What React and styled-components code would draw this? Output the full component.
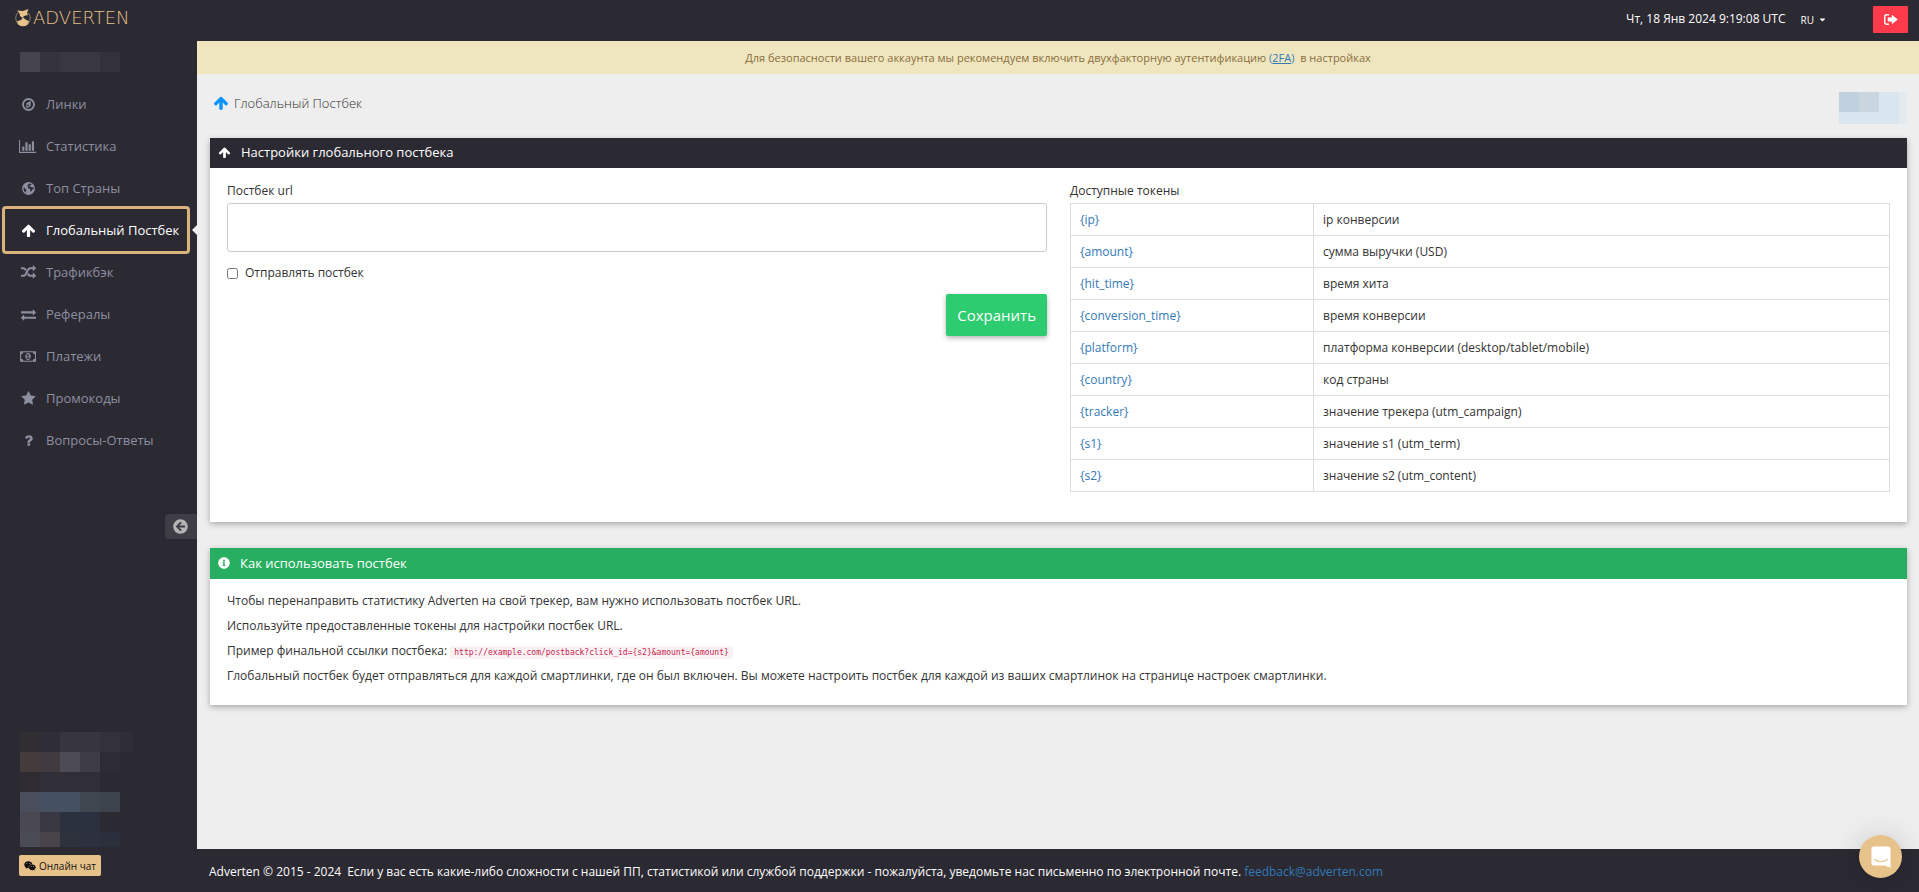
import React, { useState } from "react";
import styled, { createGlobalStyle } from "styled-components";
import { FaArrowCircleLeft, FaInfoCircle, FaWeixin, FaCaretDown } from "react-icons/fa";

const GlobalStyle = createGlobalStyle`
    * { box-sizing: border-box; }
    body { margin: 0; background: #eeeeee; color: #333; font-family: "Open Sans", "Noto Sans", sans-serif; font-size: 12px; line-height: 17px; }
    a { color: #337ab7; text-decoration: none; }
    button, textarea, input { font-family: inherit; }
`;

const Page = styled.div`
    display: grid;
    grid-template-columns: 197px 1fr;
    grid-template-rows: 41px 1fr;
    min-height: 100vh;
`;

const Header = styled.header`
    grid-column: 1 / -1;
    display: flex;
    align-items: center;
    padding: 0 11px 2px 14px;
    background: #2b2932;
    color: #fff;
`;

const Logo = styled.a`
    display: flex;
    margin: 0 auto 2px 0;
    svg { display: block; }
    text { font-family: "DejaVu Sans", sans-serif; font-weight: 200; font-size: 18px; }
`;

const Lang = styled.button`
    display: flex;
    align-items: center;
    gap: 4px;
    margin: 0 46px 0 15px;
    padding: 0;
    border: 0;
    background: none;
    color: #fff;
    font-size: 10px;
    cursor: pointer;
`;

const Clock = styled.time`
    margin-bottom: 2px;
    font-size: 12px;
`;

const Logout = styled.button`
    display: flex;
    align-items: center;
    justify-content: center;
    width: 35px;
    height: 27px;
    padding: 0;
    border: 0;
    border-radius: 1px;
    background: #ff3b4b;
    color: #fff;
    cursor: pointer;
`;

const Sidebar = styled.aside`
    display: flex;
    flex-direction: column;
    padding: 11px 0 16px;
    background: #2b2932;
`;

const Mosaic = styled.div`
    display: grid;
    grid-template-columns: ${({ $cols }) => $cols};
    grid-template-rows: ${({ $rows }) => $rows};
    margin-left: ${({ $indent }) => $indent || "0"};
`;

const Cell = styled.span`
    background: ${({ $color }) => $color};
`;

const Menu = styled.nav`
    display: flex;
    flex-direction: column;
    margin: 11px 10px 53px 5px;
`;

const MenuItem = styled.a`
    position: relative;
    display: flex;
    align-items: center;
    gap: 9px;
    height: 42px;
    padding-left: 14px;
    font-size: 13px;
    color: ${({ $active }) => ($active ? "#fff" : "#8d8fa0")};
    outline: ${({ $active }) => ($active ? "3px solid #d9b27c" : "none")};
    border-radius: 1px;

    &::after {
        content: "";
        display: ${({ $active }) => ($active ? "block" : "none")};
        position: absolute;
        right: -10px;
        top: 16px;
        border: 5px solid transparent;
        border-left: 0;
        border-right-color: #eef1f3;
    }
`;

const MenuIcon = styled.span`
    display: flex;
    justify-content: center;
    width: 18px;
`;

const Collapse = styled.button`
    display: flex;
    align-items: center;
    align-self: flex-end;
    width: 32px;
    height: 25px;
    margin-bottom: auto;
    padding: 0 8px;
    border: 0;
    border-radius: 4px 0 0 4px;
    background: #3f3d46;
    color: #b4b4b4;
    cursor: pointer;
`;

const ChatButton = styled.button`
    display: flex;
    align-items: center;
    gap: 3px;
    align-self: flex-start;
    height: 21px;
    margin: 8px 0 0 19px;
    padding: 0 5px;
    border: 0;
    border-radius: 2px;
    background: #e8c28b;
    color: #111;
    font-size: 10px;
    cursor: pointer;
`;

const Main = styled.div`
    display: flex;
    flex-direction: column;
    min-width: 0;
`;

const Notice = styled.div`
    padding: 8px 0;
    background: #efe6c0;
    color: #8a6d3b;
    font-size: 11px;
    text-align: center;
`;

const Content = styled.main`
    flex: 1;
    padding: 18px 12px 0 13px;
`;

const TitleRow = styled.div`
    display: flex;
    justify-content: space-between;
    height: 46px;
`;

const Title = styled.h1`
    display: flex;
    align-items: center;
    gap: 5px;
    height: 22px;
    margin: 0 0 0 3px;
    font-size: 13px;
    font-weight: 300;
    color: #333;
    svg { color: #0b93ff; }
`;

const Panel = styled.section`
    margin-bottom: 26px;
    background: #fff;
    box-shadow: 0 2px 6px rgba(0, 0, 0, 0.3);
`;

const PanelHead = styled.h2`
    display: flex;
    align-items: center;
    gap: 10px;
    height: ${({ $green }) => ($green ? "31px" : "30px")};
    margin: 0;
    padding: 0 8px 1px;
    background: ${({ $green }) => ($green ? "#27ae60" : "#2b2932")};
    color: #fff;
    font-size: 13px;
    font-weight: 400;
`;

const Columns = styled.form`
    display: grid;
    grid-template-columns: 1fr 1fr;
    gap: 23px;
    padding: 14px 17px 30px;
`;

const Column = styled.div`
    display: flex;
    flex-direction: column;
    min-width: 0;
`;

const Label = styled.label`
    margin-bottom: 4px;
`;

const UrlBox = styled.textarea`
    height: 49px;
    padding: 6px 8px;
    border: 1px solid #ccc;
    border-radius: 3px;
    resize: none;
    font-size: 12px;
`;

const Check = styled.label`
    display: flex;
    align-items: center;
    gap: 7px;
    margin: 12px 0 13px;
    input { width: 11px; height: 11px; margin: 1px 0 0; }
`;

const Save = styled.button`
    align-self: flex-end;
    height: 42px;
    padding: 0 11px;
    border: 0;
    border-radius: 2px;
    background: #2ecc71;
    box-shadow: 0 2px 5px rgba(0, 0, 0, 0.3);
    color: #fff;
    font-size: 15px;
    cursor: pointer;
`;

const Tokens = styled.table`
    width: 100%;
    border-collapse: collapse;
    caption { margin-bottom: 4px; text-align: left; }
    td { height: 32px; padding: 0 9px; border: 1px solid #ddd; }
    td:first-child { width: 243px; }
`;

const Help = styled.div`
    padding: 13px 17px 13px;
    p { margin: 0 0 8px; }
`;

const Code = styled.code`
    padding: 2px 4px;
    border-radius: 2px;
    background: #f9f2f4;
    color: #c7254e;
    font-family: "DejaVu Sans Mono", monospace;
    font-size: 8px;
    line-height: 1;
`;

const Footer = styled.footer`
    padding: 14px 12px 12px;
    background: #2b2932;
    color: #fff;
    font-size: 12px;
    span { margin-right: 6px; }
`;

const Messenger = styled.button`
    position: fixed;
    right: 17px;
    bottom: 14px;
    display: flex;
    align-items: center;
    justify-content: center;
    width: 43px;
    height: 43px;
    padding: 0;
    border: 0;
    border-radius: 50%;
    background: #e8c28b;
    box-shadow: 0 1px 6px rgba(0, 0, 0, 0.06), 0 2px 32px rgba(0, 0, 0, 0.16);
    cursor: pointer;
`;

const glyphs = {
    compass: "M896 128a768 768 0 1 0 0 1536a768 768 0 1 0 0-1536zM896 352a544 544 0 1 1 0 1088a544 544 0 1 1 0-1088zM1152 489v607l-512 256v-607zM768 852v293l256-128z",
    chart: "M640 896v512h-256v-512h256zm384-512v1024h-256v-1024h256zm1024 1152v128h-2048v-1536h128v1408h1920zm-640-896v768h-256v-768h256zm384-384v1152h-256v-1152h256z",
    globe: "M896 128a768 768 0 1 0 0 1536a768 768 0 1 0 0-1536zM1060 300q120 30 220 110l-90 30-40 90-120 20-60 90 90 40 110-20 60 90 130 40 110-50 50 90-60 160-110 40-70 150-120 90-60-130 20-150-110-80-150-20-60-130 80-120-90-60-30-110 130-60 90-90zM330 760l110 60 50 130 130 90 10 120-70 110 10 130q-220-130-270-380z",
    arrow: "M1675 971q0 51-37 90l-75 75q-38 38-91 38-54 0-90-38l-294-293v704q0 52-37.5 84.5t-90.5 32.5h-128q-53 0-90.5-32.5t-37.5-84.5v-704l-294 293q-36 38-90 38t-90-38l-75-75q-38-38-38-90 0-53 38-91l651-651q35-37 90-37 54 0 91 37l651 651q37 39 37 91z",
    random: "M666 481q-60 92-137 273-22-45-37-72.5t-40.5-63.5-51-56.5-63-35-81.5-14.5h-224q-14 0-23-9t-9-23v-192q0-14 9-23t23-9h224q250 0 410 225zm1126 799q0 14-9 23l-320 320q-9 9-23 9-13 0-22.5-9.5t-9.5-22.5v-192q-32 0-85 .5t-81 1-73-1-71-5-64-10.5-63-18.5-58-28.5-59-40-55-53.5-56-69.5q59-93 136-273 22 45 37 72.5t40.5 63.5 51 56.5 63 35 81.5 14.5h256v-192q0-14 9-23t23-9q12 0 24 10l319 319q9 9 9 23zm0-896q0 14-9 23l-320 320q-9 9-23 9-13 0-22.5-9.5t-9.5-22.5v-192h-256q-48 0-87 15t-69 45-51 61.5-45 77.5q-32 62-78 171-29 66-49.5 111t-54 105-64 100-74 83-90 68.5-106.5 42-128 16.5h-224q-14 0-23-9t-9-23v-192q0-14 9-23t23-9h224q48 0 87-15t69-45 51-61.5 45-77.5q32-62 78-171 29-66 49.5-111t54-105 64-100 74-83 90-68.5 106.5-42 128-16.5h256v-192q0-14 9-23t23-9q12 0 24 10l319 319q9 9 9 23z",
    exchange: "M1792 1184v192q0 13-9.5 22.5t-22.5 9.5h-1376v192q0 13-9.5 22.5t-22.5 9.5q-12 0-24-10l-319-320q-9-9-9-22 0-14 9-23l320-320q9-9 23-9 13 0 22.5 9.5t9.5 22.5v192h1376q13 0 22.5 9.5t9.5 22.5zm0-544q0 14-9 23l-320 320q-9 9-23 9-13 0-22.5-9.5t-9.5-22.5v-192h-1376q-13 0-22.5-9.5t-9.5-22.5v-192q0-13 9.5-22.5t22.5-9.5h1376v-192q0-14 9-23t23-9q12 0 24 10l319 319q9 9 9 23z",
    money: "M768 1152h384v-96h-128v-448h-114l-148 137 77 80q42-37 55-57h2v288h-128v96zm512-256q0 70-21 142t-59.5 134-101.5 101-138 39-138-39-101.5-101-59.5-134-21-142 21-142 59.5-134 101.5-101 138-39 138 39 101.5 101 59.5 134 21 142zm512 256v-512q-106 0-181-75t-75-181h-1152q0 106-75 181t-181 75v512q106 0 181 75t75 181h1152q0-106 75-181t181-75zm128-832v1152q0 26-19 45t-45 19h-1792q-26 0-45-19t-19-45v-1152q0-26 19-45t45-19h1792q26 0 45 19t19 45z",
    star: "M1728 647q0 22-26 48l-363 354 86 500q1 7 1 20 0 21-10.5 35.5t-30.5 14.5q-19 0-40-12l-449-236-449 236q-22 12-40 12-21 0-31.5-14.5t-10.5-35.5q0-6 2-20l86-500-364-354q-25-27-25-48 0-37 56-46l502-73 225-455q19-41 49-41t49 41l225 455 502 73q56 9 56 46z",
    question: "M1088 1256v240q0 16-12 28t-28 12h-240q-16 0-28-12t-12-28v-240q0-16 12-28t28-12h240q16 0 28 12t12 28zm316-600q0 54-15.5 101t-35 76.5-55 59.5-57.5 43.5-61 35.5q-41 23-68.5 65t-27.5 67q0 17-12 32.5t-28 15.5h-240q-15 0-25.5-18.5t-10.5-37.5v-45q0-83 65-156.5t143-108.5q59-27 84-56t25-76q0-42-46.5-74t-107.5-32q-65 0-108 29-35 25-107 115-13 16-31 16-12 0-25-8l-164-125q-13-10-15.5-25t5.5-28q160-266 464-266 80 0 161 31t146 83 106 127.5 41 158.5z",
};

const Glyph = ({ name, size = 15 }) => {
    const wide = name === "chart" ? 2048 : name === "money" ? 1920 : 1792;
    return (
        <svg width={(size * wide) / 1792} height={size} viewBox={`0 0 ${wide} 1792`} fill="currentColor" fillRule={name === "compass" || name === "globe" ? "evenodd" : "nonzero"} aria-hidden="true">
            <path d={glyphs[name]} />
        </svg>
    );
};

const menu = [
    ["compass", "Линки"],
    ["chart", "Статистика"],
    ["globe", "Топ Страны"],
    ["arrow", "Глобальный Постбек"],
    ["random", "Трафикбэк"],
    ["exchange", "Рефералы"],
    ["money", "Платежи"],
    ["star", "Промокоды"],
    ["question", "Вопросы-Ответы"],
];

const tokens = [
    ["{ip}", "ip конверсии"],
    ["{amount}", "сумма выручки (USD)"],
    ["{hit_time}", "время хита"],
    ["{conversion_time}", "время конверсии"],
    ["{platform}", "платформа конверсии (desktop/tablet/mobile)"],
    ["{country}", "код страны"],
    ["{tracker}", "значение трекера (utm_campaign)"],
    ["{s1}", "значение s1 (utm_term)"],
    ["{s2}", "значение s2 (utm_content)"],
];

const userCells = ["#46444e", "#35333c", "#393740", "#393740", "#33313a"];
const balanceCells = ["#c1d0df", "#c9d5df", "#d9e6f0", "#e3eaf0", "#d9e6f0", "#d9e6f0", "#d9e6f0", "#e3eaf0"];
const managerCells = [
    "#312e33", "#2f2d37", "#37353f", "#37353f", "#33313b", "#2f2d37",
    "#443c3b", "#413b40", "#4d4b55", "#3e3c46", "#2d2b35", "#2b2932",
    "#2f2b32", "#302e37", "#302e37", "#302e37", "#2b2932", "#2b2932",
    "#4a4d5c", "#455060", "#455060", "#40464f", "#3c434d", "#2b2932",
    "#4a4852", "#383742", "#2b303e", "#2b303e", "#2b2932", "#2b2932",
    "#4a4b55", "#474348", "#2e323d", "#2c303f", "#2b2f3c", "#2b2932",
];

const App = () => {
    const [url, setUrl] = useState("");
    const [send, setSend] = useState(false);

    return (
        <>
            <GlobalStyle />
            <Page>
                <Header>
                    <Logo href="#" aria-label="Adverten">
                        <svg width="122" height="22" viewBox="0 0 122 22" fill="#e8c28b">
                            <path d="M3 2.500 9 3l5.500-2-1.500 4 1 2-4 1-1.500 2L6 8l-.5-2.500z" />
                            <path d="M2.500 13.500 7 12l2-2.500 2.500 2 4 2a6.800 6.800 0 0 1-13 0z" />
                            <path d="M4 4.500a7.800 7.800 0 0 0 0 11M14 4.500a7.800 7.800 0 0 1 0 11" fill="none" stroke="#8d7a64" strokeWidth="1" />
                            <text x="19" y="16">ADVERTEN</text>
                        </svg>
                    </Logo>
                    <Clock>Чт, 18 Янв 2024 9:19:08 UTC</Clock>
                    <Lang type="button">RU <FaCaretDown size={9} /></Lang>
                    <Logout type="button" aria-label="Выйти">
                        <svg width="14" height="11" viewBox="0 0 14 11" fill="currentColor">
                            <path d="M5 .75H2.500Q.75.75.75 2.500v6q0 1.750 1.750 1.750H5" fill="none" stroke="currentColor" strokeWidth="1.400" />
                            <path d="M3.800 3.500h4V.7L13.800 5.500 7.800 10.300V7.500h-4z" />
                        </svg>
                    </Logout>
                </Header>

                <Sidebar>
                    <Mosaic $cols="repeat(5, 20px)" $rows="20px" $indent="20px">
                        {userCells.map((c, i) => <Cell key={i} $color={c} />)}
                    </Mosaic>
                    <Menu>
                        {menu.map(([icon, text]) => (
                            <MenuItem key={icon} href="#" $active={icon === "arrow"}>
                                <MenuIcon><Glyph name={icon} /></MenuIcon>
                                {text}
                            </MenuItem>
                        ))}
                    </Menu>
                    <Collapse type="button" aria-label="Свернуть меню"><FaArrowCircleLeft size={15} /></Collapse>
                    <Mosaic $cols="repeat(5, 20px) 13px" $rows="repeat(5, 20px) 15px" $indent="20px">
                        {managerCells.map((c, i) => <Cell key={i} $color={c} />)}
                    </Mosaic>
                    <ChatButton type="button"><FaWeixin size={12} /> Онлайн чат</ChatButton>
                </Sidebar>

                <Main>
                    <Notice>
                        Для безопасности вашего аккаунта мы рекомендуем включить двухфакторную аутентификацию <a href="#">(<u>2FA</u>)</a>&nbsp; в настройках
                    </Notice>
                    <Content>
                        <TitleRow>
                            <Title><Glyph name="arrow" size={16} /> Глобальный Постбек</Title>
                            <Mosaic $cols="20px 20px 20px 8px" $rows="20px 12px">
                                {balanceCells.map((c, i) => <Cell key={i} $color={c} />)}
                            </Mosaic>
                        </TitleRow>

                        <Panel>
                            <PanelHead><Glyph name="arrow" size={13} /> Настройки глобального постбека</PanelHead>
                            <Columns onSubmit={(e) => e.preventDefault()}>
                                <Column>
                                    <Label htmlFor="postback">Постбек url</Label>
                                    <UrlBox id="postback" value={url} onChange={(e) => setUrl(e.target.value)} />
                                    <Check>
                                        <input type="checkbox" checked={send} onChange={(e) => setSend(e.target.checked)} />
                                        Отправлять постбек
                                    </Check>
                                    <Save type="submit">Сохранить</Save>
                                </Column>
                                <Column>
                                    <Tokens>
                                        <caption>Доступные токены</caption>
                                        <tbody>
                                            {tokens.map(([token, text]) => (
                                                <tr key={token}>
                                                    <td><a href="#">{token}</a></td>
                                                    <td>{text}</td>
                                                </tr>
                                            ))}
                                        </tbody>
                                    </Tokens>
                                </Column>
                            </Columns>
                        </Panel>

                        <Panel>
                            <PanelHead $green><FaInfoCircle size={12} /> Как использовать постбек</PanelHead>
                            <Help>
                                <p>Чтобы перенаправить статистику Adverten на свой трекер, вам нужно использовать постбек URL.</p>
                                <p>Используйте предоставленные токены для настройки постбек URL.</p>
                                <p>Пример финальной ссылки постбека: <Code>{"http://example.com/postback?click_id={s2}&amount={amount}"}</Code></p>
                                <p>Глобальный постбек будет отправляться для каждой смартлинки, где он был включен. Вы можете настроить постбек для каждой из ваших смартлинок на странице настроек смартлинки.</p>
                            </Help>
                        </Panel>
                    </Content>
                    <Footer>
                        <span>Adverten © 2015 - 2024</span>
                        Если у вас есть какие-либо сложности с нашей ПП, статистикой или службой поддержки - пожалуйста, уведомьте нас письменно по электронной почте. <a href="#">feedback@adverten.com</a>
                    </Footer>
                </Main>
            </Page>
            <Messenger type="button" aria-label="Открыть чат">
                <svg width="20" height="22" viewBox="0 0 20 22">
                    <path d="M3 .5h14q2.500 0 2.500 2.500v18.500q-3-.5-5.500-2H3Q.5 19.500.5 17V3Q.5.5 3 .5z" fill="#fff" />
                    <path d="M3.500 13.500q6.500 4.500 13 0" fill="none" stroke="#e8c28b" strokeWidth="1.200" strokeLinecap="round" />
                </svg>
            </Messenger>
        </>
    );
};

export default App;
